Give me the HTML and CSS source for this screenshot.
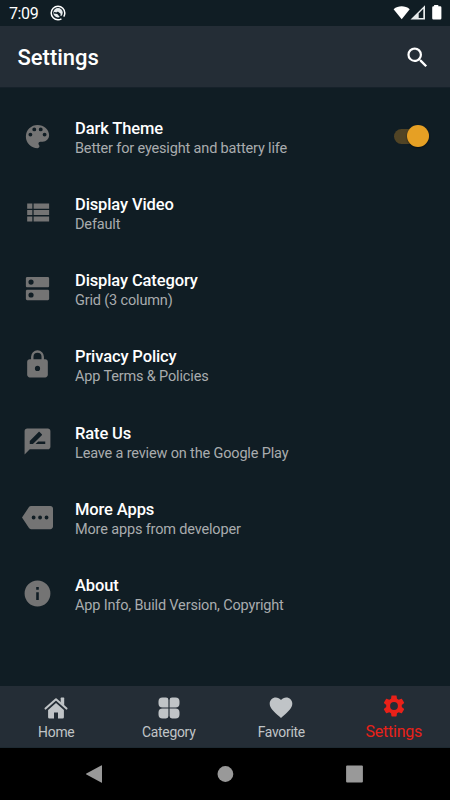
FILE: index.html
```html
<!DOCTYPE html>
<html lang="en">
<head>
<meta charset="utf-8">
<title>Settings</title>
<link rel="stylesheet" href="styles.css">
</head>
<body>
<div class="screen">
  <div class="status">
    <span class="time">7:09</span>
    <svg class="notice" viewBox="0 0 16 16"><circle cx="8" cy="8" r="6.8" fill="none" stroke="#fff" stroke-width="1.500" stroke-dasharray="39.500 3.200" stroke-dashoffset="-7"/><circle cx="8" cy="7.700" r="4.700" fill="#e8ecee"/><path d="M3.800 7.700l3.800.6 3.700 4.200M7.300 7l3.200 2.600" stroke="#101d24" stroke-width="1.500" fill="none"/></svg>
    <svg class="signals" viewBox="0 0 50 16"><path d="M.6 4.200C5.200.4 12.200.4 16.700 4.200L8.700 14.300z" fill="#fff"/><path fill-rule="evenodd" d="M17.500 14.500L32 .2v14.300zM25.700 13V8.500L30.300 3.800V13z" fill="#e8ebec"/><path d="M26.700 8.700h2.200v4.300h-2.200z" fill="#101d24"/><path d="M41.100 1.200V0h4.200v1.200h1.900q1.200 0 1.200 1.200v10.900q0 1.200-1.200 1.200h-6.800q-1.200 0-1.200-1.200V2.400q0-1.200 1.200-1.200z" fill="#fff"/></svg>
  </div>
  <header class="appbar">
    <h1>Settings</h1>
    <svg class="search" viewBox="0 0 24 24"><path d="M15.500 14h-.79l-.28-.27A6.471 6.471 0 0 0 16 9.500 6.500 6.500 0 1 0 9.500 16c1.610 0 3.090-.59 4.230-1.570l.27.28v.79l5 4.990L20.490 19l-4.990-5zm-6 0C7.010 14 5 11.990 5 9.500S7.010 5 9.500 5 14 7.010 14 9.500 11.990 14 9.500 14z"/></svg>
  </header>
  <main class="list">
    <div class="row">
      <svg class="icon" viewBox="0 0 24 24"><path d="M12 3a9 9 0 0 0 0 18c.83 0 1.500-.67 1.500-1.500 0-.39-.15-.74-.39-1.010-.23-.26-.38-.61-.38-.99 0-.83.67-1.500 1.500-1.500H16c2.760 0 5-2.240 5-5 0-4.420-4.030-8-9-8zm-5.500 9a1.500 1.500 0 1 1 0-3 1.500 1.500 0 0 1 0 3zm3-4a1.500 1.500 0 1 1 0-3 1.500 1.500 0 0 1 0 3zm5 0a1.500 1.500 0 1 1 0-3 1.500 1.500 0 0 1 0 3zm3 4a1.500 1.500 0 1 1 0-3 1.500 1.500 0 0 1 0 3z"/></svg>
      <div class="text"><h2>Dark Theme</h2><p>Better for eyesight and battery life</p></div>
      <span class="switch"><span class="thumb"></span></span>
    </div>
    <div class="row">
      <svg class="icon" viewBox="0 0 24 24"><path d="M4 14h4v-4H4v4zm0 5h4v-4H4v4zM4 9h4V5H4v4zm5 5h12v-4H9v4zm0 5h12v-4H9v4zM9 5v4h12V5H9z"/></svg>
      <div class="text"><h2>Display Video</h2><p>Default</p></div>
    </div>
    <div class="row">
      <svg class="icon" viewBox="0 0 24 24"><path d="M20 13H4c-.55 0-1 .45-1 1v6c0 .55.45 1 1 1h16c.55 0 1-.45 1-1v-6c0-.55-.45-1-1-1zM7 19a2 2 0 1 1 0-4 2 2 0 0 1 0 4zM20 3H4c-.55 0-1 .45-1 1v6c0 .55.45 1 1 1h16c.55 0 1-.45 1-1V4c0-.55-.45-1-1-1zM7 9a2 2 0 1 1 0-4 2 2 0 0 1 0 4z"/></svg>
      <div class="text"><h2>Display Category</h2><p>Grid (3 column)</p></div>
    </div>
    <div class="row">
      <svg class="icon" viewBox="0 0 24 24"><path d="M18 8h-1V6A5 5 0 0 0 7 6v2H6c-1.100 0-2 .9-2 2v10c0 1.100.9 2 2 2h12c1.100 0 2-.9 2-2V10c0-1.100-.9-2-2-2zm-6 9a2 2 0 1 1 0-4 2 2 0 0 1 0 4zm3.100-9H8.900V6a3.100 3.100 0 0 1 6.200 0v2z"/></svg>
      <div class="text"><h2>Privacy Policy</h2><p>App Terms &amp; Policies</p></div>
    </div>
    <div class="row">
      <svg class="icon" viewBox="0 0 24 24"><path d="M20 2H4c-1.100 0-1.990.9-1.990 2L2 22l4-4h14c1.100 0 2-.9 2-2V4c0-1.100-.9-2-2-2zM6 14v-2.470l6.880-6.880c.2-.2.51-.2.71 0l1.770 1.770c.2.2.2.51 0 .71L8.470 14H6zm12 0h-7.500l2-2H18v2z"/></svg>
      <div class="text"><h2>Rate Us</h2><p>Leave a review on the Google Play</p></div>
    </div>
    <div class="row">
      <svg class="icon" viewBox="0 0 24 24"><path d="M22 3H7c-.69 0-1.230.35-1.590.88L0 12l5.410 8.110c.36.53.9.89 1.590.89h15c1.100 0 2-.9 2-2V5c0-1.100-.9-2-2-2zM9 13.500a1.500 1.500 0 1 1 0-3 1.500 1.500 0 0 1 0 3zm5 0a1.500 1.500 0 1 1 0-3 1.500 1.500 0 0 1 0 3zm5 0a1.500 1.500 0 1 1 0-3 1.500 1.500 0 0 1 0 3z"/></svg>
      <div class="text"><h2>More Apps</h2><p>More apps from developer</p></div>
    </div>
    <div class="row">
      <svg class="icon" viewBox="0 0 24 24"><path d="M12 2a10 10 0 1 0 0 20 10 10 0 0 0 0-20zm1 15h-2v-6h2v6zm0-8h-2V7h2v2z"/></svg>
      <div class="text"><h2>About</h2><p>App Info, Build Version, Copyright</p></div>
    </div>
  </main>
  <nav class="tabs">
    <div class="tab">
      <svg viewBox="0 0 24 24"><path d="M4.100 14L12 6.900l7.900 7.100v7.200q0 1.300-1.300 1.300H14v-6h-4v6H5.400q-1.300 0-1.300-1.300z"/><path d="M1.500 12.600L12 3.200l10.500 9.400" fill="none" stroke="#c0c4c7" stroke-width="2" stroke-linecap="round" stroke-linejoin="round"/><path d="M16.700 2.200q0-.6.6-.6h2.300q.6 0 .6.6v7.500l-3.500-3.100z"/></svg>
      <span>Home</span>
    </div>
    <div class="tab">
      <svg viewBox="0 0 24 24"><path d="M5.500 1.500H9q2.400 0 2.400 2.400v7.500H5.500a4 4 0 0 1-4-4V5.500a4 4 0 0 1 4-4zM15 1.500h3.500a4 4 0 0 1 4 4v1.900a4 4 0 0 1-4 4h-5.900V3.900q0-2.400 2.400-2.400zM5.500 12.600h5.900v7.500q0 2.400-2.400 2.400H5.500a4 4 0 0 1-4-4v-1.900a4 4 0 0 1 4-4zM12.600 12.600h5.900a4 4 0 0 1 4 4v1.900a4 4 0 0 1-4 4H15q-2.400 0-2.400-2.400z"/></svg>
      <span>Category</span>
    </div>
    <div class="tab">
      <svg viewBox="0 0 24 24"><path d="M12 22.100l-1.600-1.500C4.500 15.300.7 11.900.7 7.700.7 4.300 3.400 1.600 6.800 1.600c2 0 3.900.9 5.200 2.400 1.300-1.500 3.200-2.400 5.200-2.400 3.400 0 6.100 2.700 6.100 6.100 0 4.200-3.800 7.600-9.700 12.900z"/></svg>
      <span>Favorite</span>
    </div>
    <div class="tab active">
      <svg viewBox="0 0 24 24"><path d="M19.140 12.940c.04-.3.060-.61.060-.94 0-.32-.020-.64-.070-.94l2.030-1.580c.18-.14.23-.41.12-.61l-1.920-3.320c-.12-.22-.37-.29-.59-.22l-2.390.96c-.5-.38-1.030-.7-1.620-.94l-.36-2.540c-.04-.24-.24-.41-.48-.41h-3.840c-.24 0-.43.17-.47.41l-.36 2.540c-.59.24-1.130.57-1.620.94l-2.390-.96c-.22-.08-.47 0-.59.22L2.740 8.870c-.12.21-.080.47.12.61l2.030 1.580c-.05.3-.09.63-.09.94s.02.64.07.94l-2.030 1.580c-.18.14-.23.41-.12.61l1.920 3.320c.12.22.37.29.59.22l2.390-.96c.5.38 1.030.7 1.620.94l.36 2.540c.05.24.24.41.48.41h3.840c.24 0 .44-.17.47-.41l.36-2.540c.59-.24 1.130-.56 1.620-.94l2.390.96c.22.08.47 0 .59-.22l1.920-3.320c.12-.22.07-.47-.12-.61l-2.010-1.580zM12 15.600A3.600 3.600 0 1 1 12 8.400a3.600 3.600 0 0 1 0 7.200z"/></svg>
      <span>Settings</span>
    </div>
  </nav>
  <div class="system">
    <svg viewBox="0 0 18 18"><path d="M17 .8v16.400q0 .9-.8.4L1.400 9.500Q.5 9 1.400 8.500L16.200.4q.8-.5.8.4z"/></svg>
    <svg viewBox="0 0 18 18"><circle cx="9.400" cy="9" r="7.900"/></svg>
    <svg viewBox="0 0 18 18"><rect x=".1" y=".6" width="16.800" height="16.800" rx="1"/></svg>
  </div>
</div>
</body>
</html>
```
FILE: styles.css
```css
* { box-sizing: border-box; }
body { margin: 0; background: #101d24; }
h1, h2, p { margin: 0; }
.screen {
  width: 450px;
  height: 800px;
  display: flex;
  flex-direction: column;
  overflow: hidden;
  background: #101d24;
  font-family: Roboto, "Liberation Sans", sans-serif;
}
.status { height: 26px; display: flex; align-items: center; padding: 0 7px 0 9px; color: #fff; }
.time { font-size: 16px; width: 41px; line-height: 26px; padding-top: 2px; letter-spacing: -.4px; }
.notice { width: 16px; height: 16px; }
.signals { width: 50px; height: 16px; margin-left: auto; }
.appbar {
  height: 62px;
  display: flex;
  align-items: center;
  justify-content: space-between;
  padding: 2px 19px 0 17.5px;
  background: #242d36;
  border-bottom: 1px solid #16212a;
}
.appbar h1 { color: #fff; font-size: 22px; line-height: 28px; font-weight: 500; padding-top: 1px; }
.search { width: 27px; height: 27px; fill: #fff; }
.list { flex: 1; padding-top: 10px; }
.row { height: 76.25px; display: flex; align-items: center; padding: 0 21px 0 22px; }
.icon { width: 31px; height: 31px; margin-right: 22px; fill: #747474; }
.text { flex: 1; padding-top: 5px; }
.text h2 { color: #fff; font-size: 16.5px; line-height: 20px; font-weight: 500; letter-spacing: -.12px; }
.text p { color: #a9acae; font-size: 14.5px; line-height: 20px; letter-spacing: -.16px; }
.switch { display: flex; align-items: center; justify-content: flex-end; width: 35px; height: 15px; border-radius: 8px; background: #514425; }
.thumb { flex: none; width: 22px; height: 22px; border-radius: 50%; background: #e6a024; box-shadow: 0 1px 2px rgba(0, 0, 0, .5); }
.tabs { height: 62px; display: grid; grid-template-columns: repeat(4, 1fr); background: #242d36; border-bottom: 1px solid #1d2931; }
.tab { display: flex; flex-direction: column; align-items: center; padding-top: 10px; color: #c0c4c7; fill: #c0c4c7; }
.tab svg { width: 24px; height: 24px; }
.tab span { font-size: 13.9px; line-height: 18px; margin-top: 3px; letter-spacing: -.28px; }
.tab.active { padding-top: 7px; color: #e92119; fill: #e92119; }
.tab.active svg { width: 26px; height: 26px; }
.tab.active span { font-size: 16px; margin-top: 4px; letter-spacing: -.25px; }
.system { height: 52px; display: flex; justify-content: space-between; align-items: center; padding: 0 86px 0 85px; background: #000; fill: #999; }
.system svg { width: 18px; height: 18px; }
```
